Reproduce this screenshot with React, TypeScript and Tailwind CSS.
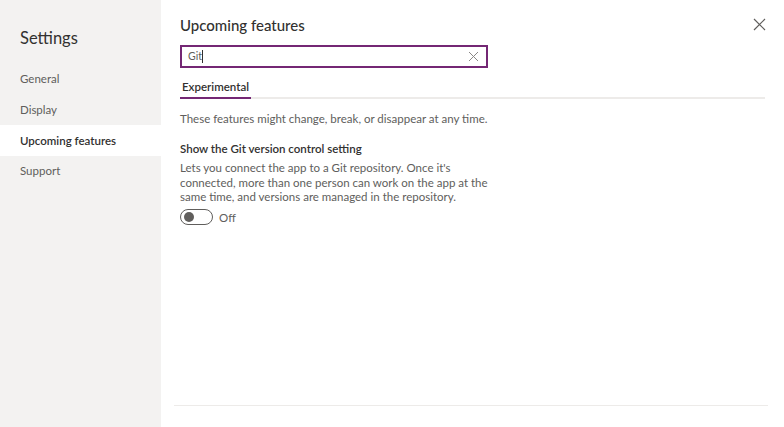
import React from "react";

export default function App() {
  const font = { fontFamily: 'Lato, "Open Sans", sans-serif' };
  return (
    <div className="flex h-[427px] w-[784px] overflow-hidden bg-white text-[#323130]" style={font}>
      <aside className="flex w-[161px] shrink-0 flex-col bg-[#f3f2f1]">
        <div className="pl-5 pt-[27px] text-[16.5px] leading-[22px] text-[#323130]">Settings</div>
        <nav className="mt-[14px] flex flex-col text-[11.5px]">
          <div className="flex h-[31px] items-center pl-5 text-[#605e5c]">General</div>
          <div className="flex h-[31px] items-center pl-5 text-[#605e5c]">Display</div>
          <div className="flex h-[31px] items-center bg-white pl-5 font-semibold text-[#323130]">Upcoming features</div>
          <div className="flex h-[30px] items-center pl-5 text-[#605e5c]">Support</div>
        </nav>
      </aside>
      <main className="relative flex flex-1 flex-col border-r border-[#c8c6c4] pl-[19px] pr-[18px]">
        <div className="pt-[15px] text-[15px] leading-[20px] font-medium">Upcoming features</div>
        <div className="mt-[10px] flex h-[23px] w-[308px] items-center border-2 border-[#742774] pl-[6px] pr-[7px]">
          <span className="text-[10.5px] text-[#605e5c]">Git</span>
          <span className="h-[13px] w-px bg-[#323130]" />
          <span className="flex-1" />
          <svg width="11" height="11" viewBox="0 0 11 11" className="text-[#8a8886]">
            <path d="M1 1 L10 10 M10 1 L1 10" stroke="currentColor" strokeWidth="1" />
          </svg>
        </div>
        <div className="mt-[10px] flex border-b-2 border-[#edebe9] w-[585px]">
          <div className="-mb-[2px] border-b-2 border-[#742774] px-[2px] pb-[1px] text-[11.5px] font-semibold leading-[18px]">Experimental</div>
        </div>
        <div className="mt-[12px] text-[11.5px] leading-[16px] text-[#605e5c]">These features might change, break, or disappear at any time.</div>
        <div className="mt-[14px] text-[11.5px] font-semibold leading-[16px]">Show the Git version control setting</div>
        <div className="mt-[4px] w-[310px] text-[11.5px] leading-[14.5px] text-[#605e5c]">
          Lets you connect the app to a Git repository. Once it's connected, more than one person can work on the app at the same time, and versions are managed in the repository.
        </div>
        <div className="mt-[4px] flex items-center gap-[6px]">
          <div className="flex h-[16px] w-[33px] items-center rounded-full border border-[#605e5c] pl-[3px]">
            <div className="h-[10px] w-[10px] rounded-full bg-[#605e5c]" />
          </div>
          <span className="text-[11.5px] text-[#605e5c]">Off</span>
        </div>
        <div className="flex-1" />
        <div className="mb-[21px] -ml-[6px] h-px w-[594px] bg-[#edebe9]" />
        <button className="absolute right-[20px] top-[18px]">
          <svg width="13" height="13" viewBox="0 0 13 13" className="text-[#605e5c]">
            <path d="M1 1 L12 12 M12 1 L1 12" stroke="currentColor" strokeWidth="1.2" />
          </svg>
        </button>
      </main>
    </div>
  );
}
